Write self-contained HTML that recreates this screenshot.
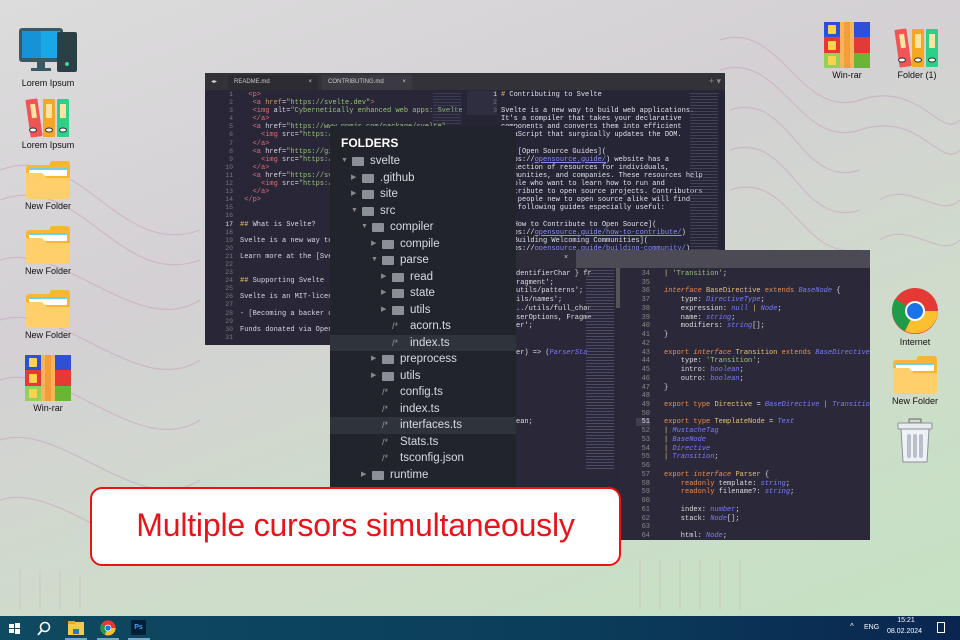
<!DOCTYPE html>
<html><head><meta charset="utf-8"><style>
*{margin:0;padding:0;box-sizing:border-box}
body{width:960px;height:640px;overflow:hidden;position:relative;font-family:"Liberation Sans",sans-serif;
background:linear-gradient(160deg,#dcdcdc 0%,#d4d0d4 35%,#cfdccb 65%,#c4e2c2 100%)}
.bgl{position:absolute;left:0;top:0}
.ic{position:absolute;text-align:center;font-size:9px;color:#111;width:70px}
.ic svg{display:block;margin:0 auto 2px}
.win{position:absolute;overflow:hidden}
.mono{font-family:"Liberation Mono",monospace;white-space:pre}
.tree{position:absolute;left:330px;top:126px;width:186px;height:370px;background:#21252b;color:#d7dae0;font-size:11.5px}
.tree .r{height:16.5px;line-height:16.5px;position:relative}
.tree .hl{background:#2f333b}
.tree .a{position:absolute;font-size:7px;color:#888}
.tree .f{position:absolute;top:4px;width:12px;height:9px;background:#8b8f96;border-radius:1px}
.tree .s{position:absolute;color:#999;font-size:9px}
.tree .t{position:absolute}
</style></head><body>
<svg class="bgl" width="960" height="640" fill="none" stroke="#c9a0c0" stroke-width="1.2" opacity=".55">
<path d="M0 170 C80 140 120 260 200 230"/><path d="M0 200 C80 170 120 290 200 260"/><path d="M0 260 C60 240 140 340 200 300"/><path d="M0 320 C60 300 140 400 200 360"/><path d="M0 380 C60 360 140 460 200 420"/><path d="M0 440 C60 420 140 520 200 480"/><path d="M0 500 C60 480 140 580 200 540"/>
<path d="M720 40 C780 20 800 120 860 100 S940 140 960 120"/><path d="M720 70 C780 50 800 150 860 130 S940 170 960 150"/><path d="M730 110 C790 90 800 190 860 170"/><path d="M730 150 C790 130 800 230 860 210"/><path d="M730 190 C790 170 800 260 860 250"/><path d="M880 200 C910 180 940 220 960 200"/><path d="M880 240 C910 220 940 260 960 240"/>
<g opacity=".5"><path d="M20 570 v40 M40 570 v40 M60 570 v40 M80 575 v35 M640 560 v50 M660 560 v50 M680 560 v50 M700 560 v50 M720 560 v50 M740 560 v50"/></g>
</svg>
<svg width="0" height="0" style="position:absolute">
<symbol id="fold" viewBox="0 0 46 40"><path d="M26 2h16a3 3 0 0 1 3 3v6H22z" fill="#f5b731"/><rect x="1" y="6" width="44" height="33" rx="3" fill="#f7b733"/><rect x="4" y="9" width="38" height="8" fill="#fff"/><rect x="4" y="9" width="38" height="2" fill="#6fd0e8"/><path d="M1 14h16l5 5h23v18a3 3 0 0 1-3 3H4a3 3 0 0 1-3-3z" fill="#fecf6b"/></symbol>
<symbol id="books" viewBox="0 0 46 42"><rect x="3" y="3" width="12" height="38" rx="1" fill="#f05454" transform="rotate(-8 9 22)"/><rect x="18" y="3" width="12" height="38" rx="1" fill="#f5a623"/><rect x="32" y="3" width="12" height="38" rx="1" fill="#2ecf86"/><rect x="7" y="8" width="5" height="14" fill="#ffe3a0" transform="rotate(-8 9 22)"/><rect x="21" y="8" width="6" height="14" fill="#ffe3a0"/><rect x="35" y="8" width="6" height="14" fill="#ffe3a0"/><ellipse cx="8" cy="34" rx="3.5" ry="2" fill="#fff" stroke="#333"/><ellipse cx="24" cy="34" rx="3.5" ry="2" fill="#fff" stroke="#333"/><ellipse cx="38" cy="34" rx="3.5" ry="2" fill="#fff" stroke="#333"/></symbol>
<symbol id="rar" viewBox="0 0 46 46"><rect x="0" y="0" width="46" height="15" fill="#2e4fd8"/><rect x="0" y="15" width="46" height="16" fill="#e53935"/><rect x="0" y="31" width="46" height="15" fill="#6ab534"/><rect x="0" y="31" width="16" height="15" fill="#93d25a"/><rect x="16" y="0" width="14" height="46" fill="#f7b45a"/><rect x="20" y="0" width="6" height="46" fill="#f39c3a"/><rect x="4" y="3" width="8" height="9" rx="1" fill="#fdd34d"/><rect x="4" y="19" width="8" height="9" rx="1" fill="#fdd34d"/><rect x="4" y="34" width="8" height="9" rx="1" fill="#fdd34d"/></symbol>
</svg>
<div class="ic" style="left:13px;top:26px"><svg width="62" height="50" viewBox="0 0 62 50"><rect x="2" y="2" width="44" height="34" rx="3" fill="#3b5964"/><rect x="5" y="5" width="38" height="27" fill="#19a7e8"/><rect x="5" y="5" width="19" height="27" fill="#1693d6"/><rect x="20" y="36" width="8" height="6" fill="#3b5964"/><rect x="14" y="42" width="20" height="3" fill="#3b5964"/><rect x="40" y="6" width="20" height="40" rx="2" fill="#2b3f46"/><circle cx="50" cy="38" r="2" fill="#3ed49a"/></svg>Lorem Ipsum</div>
<div class="ic" style="left:13px;top:96px"><svg width="46" height="42"><use href="#books"/></svg>Lorem Ipsum</div>
<div class="ic" style="left:13px;top:159px"><svg width="46" height="40"><use href="#fold"/></svg>New Folder</div>
<div class="ic" style="left:13px;top:224px"><svg width="46" height="40"><use href="#fold"/></svg>New Folder</div>
<div class="ic" style="left:13px;top:288px"><svg width="46" height="40"><use href="#fold"/></svg>New Folder</div>
<div class="ic" style="left:13px;top:355px"><svg width="46" height="46"><use href="#rar"/></svg>Win-rar</div>
<div class="ic" style="left:812px;top:22px"><svg width="46" height="46"><use href="#rar"/></svg>Win-rar</div>
<div class="ic" style="left:882px;top:26px"><svg width="46" height="42"><use href="#books"/></svg>Folder (1)</div>
<div class="ic" style="left:880px;top:287px"><svg width="48" height="48" viewBox="0 0 48 48"><circle cx="24" cy="24" r="23" fill="#e53935"/><path d="M24 24 L4 12 A23 23 0 0 0 14 44 Z" fill="#1e9c4a"/><path d="M24 24 L14 44 A23 23 0 0 0 47 24 Z" fill="#fbc02d"/><circle cx="24" cy="24" r="10" fill="#fff"/><circle cx="24" cy="24" r="8" fill="#1a73e8"/></svg>Internet</div>
<div class="ic" style="left:880px;top:354px"><svg width="46" height="40"><use href="#fold"/></svg>New Folder</div>
<div class="ic" style="left:880px;top:418px"><svg width="40" height="46" viewBox="0 0 40 46"><rect x="14" y="1" width="12" height="4" rx="1" fill="none" stroke="#888" stroke-width="1.5"/><rect x="3" y="5" width="34" height="6" rx="1" fill="#e8ecf2" stroke="#8a8f98"/><path d="M6 11h28l-2 33H8z" fill="#eef1f5" stroke="#8a8f98"/><rect x="12" y="16" width="4" height="24" rx="2" fill="#b9c0cc"/><rect x="18" y="16" width="4" height="24" rx="2" fill="#b9c0cc"/><rect x="24" y="16" width="4" height="24" rx="2" fill="#b9c0cc"/></svg></div>

<div class="win" style="left:205px;top:73px;width:520px;height:272px;background:#282637">
 <div style="height:17px;background:#333238;position:relative;font-size:6px;color:#ccc">
  <span style="position:absolute;left:6px;top:5px;font-size:6px">◂▸</span>
  <div style="position:absolute;left:23px;top:2px;width:90px;height:15px;background:#2d2c33;padding:4px 6px">README.md<span style="float:right">×</span></div>
  <div style="position:absolute;left:117px;top:2px;width:90px;height:15px;background:#3b3a42;padding:4px 6px">CONTRIBUTING.md<span style="float:right">×</span></div>
  <span style="position:absolute;right:4px;top:3px;font-size:9px;color:#888">+ ▾</span>
 </div>
 <div class="mono" style="position:absolute;left:0;top:18px;width:28px;text-align:right;font-size:6.5px;line-height:8.1px;color:#777">1
2
3
4
5
6
7
8
9
10
11
12
13
14
15
16
<span style="color:#ddd">17</span>
18
19
20
21
22
23
24
25
26
27
28
29
30
31</div>
 <div class="mono" style="position:absolute;left:35px;top:18px;font-size:7px;line-height:8.1px;color:#d8d8e0">  <span style="color:#e06c75">&lt;p&gt;</span>
   <span style="color:#e06c75">&lt;a</span> <span style="color:#d19a66">href</span>=<span style="color:#98c379">"https://svelte.dev"</span><span style="color:#e06c75">&gt;</span>
   <span style="color:#e06c75">&lt;img</span> alt=<span style="color:#98c379">"Cybernetically enhanced web apps: Svelte"</span>
   <span style="color:#e06c75">&lt;/a&gt;</span>
   <span style="color:#e06c75">&lt;a</span> href=<span style="color:#98c379">"https://www.npmjs.com/package/svelte"</span>
     <span style="color:#e06c75">&lt;img</span> src=<span style="color:#98c379">"https://img"</span>
   <span style="color:#e06c75">&lt;/a&gt;</span>
   <span style="color:#e06c75">&lt;a</span> href=<span style="color:#98c379">"https://github"</span>
     <span style="color:#e06c75">&lt;img</span> src=<span style="color:#98c379">"https://img"</span>
   <span style="color:#e06c75">&lt;/a&gt;</span>
   <span style="color:#e06c75">&lt;a</span> href=<span style="color:#98c379">"https://svelte"</span>
     <span style="color:#e06c75">&lt;img</span> src=<span style="color:#98c379">"https://img"</span>
   <span style="color:#e06c75">&lt;/a&gt;</span>
 <span style="color:#e06c75">&lt;/p&gt;</span>


<span style="color:#f0c060">##</span> What is Svelte?

Svelte is a new way to build

Learn more at the [Svelte


<span style="color:#f0c060">##</span> Supporting Svelte

Svelte is an MIT-licensed

- [Becoming a backer on

Funds donated via Open C</div>
 <div style="position:absolute;left:228px;top:20px;width:28px;height:90px;background:repeating-linear-gradient(#4a4a6a 0 1px,transparent 1px 3px);opacity:.6"></div>
 <div style="position:absolute;left:257px;top:18px;width:300px;height:254px;background:#262535"></div>
 <div class="mono" style="position:absolute;left:262px;top:18px;width:30px;text-align:right;font-size:6.5px;line-height:8.1px;color:#777;background:#2f2e40"><span style="color:#ddd">1</span>
2
3</div>
 <div class="mono" style="position:absolute;left:296px;top:18px;font-size:7px;line-height:8.1px;color:#e0e0e8"><span style="color:#f0c060">#</span> Contributing to Svelte

Svelte is a new way to build web applications.
It's a compiler that takes your declarative
components and converts them into efficient
JavaScript that surgically updates the DOM.

The [Open Source Guides](
https://<span style="color:#8a8aff;text-decoration:underline">opensource.guide/</span>) website has a
collection of resources for individuals,
communities, and companies. These resources help
people who want to learn how to run and
contribute to open source projects. Contributors
and people new to open source alike will find
the following guides especially useful:

* [How to Contribute to Open Source](
https://<span style="color:#8a8aff;text-decoration:underline">opensource.guide/how-to-contribute/</span>)
* [Building Welcoming Communities](
https://<span style="color:#8a8aff;text-decoration:underline">opensource.guide/building-community/</span>)</div>
 <div style="position:absolute;left:485px;top:20px;width:28px;height:160px;background:repeating-linear-gradient(#55556f 0 1px,transparent 1px 3px);opacity:.6"></div>
</div>

<div class="win" style="left:516px;top:250px;width:354px;height:290px;background:#2a2838">
 <div style="height:18px;background:#4b4a55;position:relative"><div style="position:absolute;left:0;top:0;width:60px;height:18px;background:#2d2c38;color:#ccc;font-size:7px;padding:4px 0 0 48px">×</div></div>
 <div class="mono" style="position:absolute;left:0;top:20px;font-size:7px;line-height:8.73px;color:#ddd">dentifierChar } fr
ragment';
utils/patterns';
ils/names';
../utils/full_char
serOptions, Fragme
er';


er) =&gt; (<span style="color:#7a7aff;font-style:italic">ParserSta</span>







ean;</div>
 <div style="position:absolute;left:70px;top:20px;width:28px;height:200px;background:repeating-linear-gradient(#5a5a78 0 1px,transparent 1px 3px);opacity:.7"></div>
 <div style="position:absolute;left:100px;top:18px;width:4px;height:40px;background:#555"></div>
 <div style="position:absolute;left:104px;top:18px;width:250px;height:272px;background:#2b2939"></div>
 <div class="mono" style="position:absolute;left:104px;top:20px;width:30px;text-align:right;font-size:7px;line-height:8.73px;color:#888">34
35
36
37
38
39
40
41
42
43
44
45
46
47
48
49
50
<span style="background:#3e3d52;color:#ddd;padding-left:6px">51</span>
52
53
54
55
56
57
58
59
60
61
62
63
64</div>
 <div class="mono" style="position:absolute;left:148px;top:20px;font-size:7px;line-height:8.73px;color:#ddd"><span style="color:#e5c07b">|</span> <span style="color:#98c379">'Transition'</span>;

<span style="color:#f08d49;font-style:italic">interface</span> <span style="color:#e5c07b">BaseDirective</span> <span style="color:#f08d49">extends</span> <span style="color:#7a7aff;font-style:italic">BaseNode</span> {
    type: <span style="color:#7a7aff;font-style:italic">DirectiveType</span>;
    expression: <span style="color:#7a7aff;font-style:italic">null</span> <span style="color:#e5c07b">|</span> <span style="color:#7a7aff;font-style:italic">Node</span>;
    name: <span style="color:#7a7aff;font-style:italic">string</span>;
    modifiers: <span style="color:#7a7aff;font-style:italic">string</span>[];
}

<span style="color:#f08d49">export</span> <span style="color:#f08d49;font-style:italic">interface</span> <span style="color:#e5c07b">Transition</span> <span style="color:#f08d49">extends</span> <span style="color:#7a7aff;font-style:italic">BaseDirective</span>
    type: <span style="color:#98c379">'Transition'</span>;
    intro: <span style="color:#7a7aff;font-style:italic">boolean</span>;
    outro: <span style="color:#7a7aff;font-style:italic">boolean</span>;
}

<span style="color:#f08d49">export</span> <span style="color:#f08d49">type</span> <span style="color:#e5c07b">Directive</span> = <span style="color:#7a7aff;font-style:italic">BaseDirective</span> <span style="color:#e5c07b">|</span> <span style="color:#7a7aff;font-style:italic">Transition</span>

<span style="color:#f08d49">export</span> <span style="color:#f08d49">type</span> <span style="color:#e5c07b">TemplateNode</span> = <span style="color:#7a7aff;font-style:italic">Text</span>
<span style="color:#e5c07b">|</span> <span style="color:#7a7aff;font-style:italic">MustacheTag</span>
<span style="color:#e5c07b">|</span> <span style="color:#7a7aff;font-style:italic">BaseNode</span>
<span style="color:#e5c07b">|</span> <span style="color:#7a7aff;font-style:italic">Directive</span>
<span style="color:#e5c07b">|</span> <span style="color:#7a7aff;font-style:italic">Transition</span>;

<span style="color:#f08d49">export</span> <span style="color:#f08d49;font-style:italic">interface</span> <span style="color:#e5c07b">Parser</span> {
    <span style="color:#f08d49">readonly</span> template: <span style="color:#7a7aff;font-style:italic">string</span>;
    <span style="color:#f08d49">readonly</span> filename?: <span style="color:#7a7aff;font-style:italic">string</span>;

    index: <span style="color:#7a7aff;font-style:italic">number</span>;
    stack: <span style="color:#7a7aff;font-style:italic">Node</span>[];

    html: <span style="color:#7a7aff;font-style:italic">Node</span>;</div>
</div>

<div class="tree">
 <div style="height:27px;padding:10px 0 0 11px;font-weight:bold;font-size:12px;color:#fff">FOLDERS</div>
 <div class="r"><span class="a" style="left:11px">▼</span><span class="f" style="left:22px"></span><span class="t" style="left:40px">svelte</span></div>
 <div class="r"><span class="a" style="left:21px">▶</span><span class="f" style="left:32px"></span><span class="t" style="left:50px">.github</span></div>
 <div class="r"><span class="a" style="left:21px">▶</span><span class="f" style="left:32px"></span><span class="t" style="left:50px">site</span></div>
 <div class="r"><span class="a" style="left:21px">▼</span><span class="f" style="left:32px"></span><span class="t" style="left:50px">src</span></div>
 <div class="r"><span class="a" style="left:31px">▼</span><span class="f" style="left:42px"></span><span class="t" style="left:60px">compiler</span></div>
 <div class="r"><span class="a" style="left:41px">▶</span><span class="f" style="left:52px"></span><span class="t" style="left:70px">compile</span></div>
 <div class="r"><span class="a" style="left:41px">▼</span><span class="f" style="left:52px"></span><span class="t" style="left:70px">parse</span></div>
 <div class="r"><span class="a" style="left:51px">▶</span><span class="f" style="left:62px"></span><span class="t" style="left:80px">read</span></div>
 <div class="r"><span class="a" style="left:51px">▶</span><span class="f" style="left:62px"></span><span class="t" style="left:80px">state</span></div>
 <div class="r"><span class="a" style="left:51px">▶</span><span class="f" style="left:62px"></span><span class="t" style="left:80px">utils</span></div>
 <div class="r"><span class="s" style="left:62px">/*</span><span class="t" style="left:80px">acorn.ts</span></div>
 <div class="r hl"><span class="s" style="left:62px">/*</span><span class="t" style="left:80px">index.ts</span></div>
 <div class="r"><span class="a" style="left:41px">▶</span><span class="f" style="left:52px"></span><span class="t" style="left:70px">preprocess</span></div>
 <div class="r"><span class="a" style="left:41px">▶</span><span class="f" style="left:52px"></span><span class="t" style="left:70px">utils</span></div>
 <div class="r"><span class="s" style="left:52px">/*</span><span class="t" style="left:70px">config.ts</span></div>
 <div class="r"><span class="s" style="left:52px">/*</span><span class="t" style="left:70px">index.ts</span></div>
 <div class="r hl"><span class="s" style="left:52px">/*</span><span class="t" style="left:70px">interfaces.ts</span></div>
 <div class="r"><span class="s" style="left:52px">/*</span><span class="t" style="left:70px">Stats.ts</span></div>
 <div class="r"><span class="s" style="left:52px">/*</span><span class="t" style="left:70px">tsconfig.json</span></div>
 <div class="r"><span class="a" style="left:31px">▶</span><span class="f" style="left:42px"></span><span class="t" style="left:60px">runtime</span></div>
</div>

<div style="position:absolute;left:90px;top:487px;width:531px;height:79px;background:#fff;border:2px solid #f01010;border-radius:12px;color:#e8141a;font-size:32px;text-align:center;line-height:72px;letter-spacing:-.2px">Multiple cursors simultaneously</div>

<div style="position:absolute;left:0;top:616px;width:960px;height:24px;background:linear-gradient(90deg,#0e4a60,#0b3d5a 60%,#0a2550)">
 <svg style="position:absolute;left:9px;top:7px" width="11" height="11"><rect x="0" y="1" width="5" height="4" fill="#fff"/><rect x="6" y="0" width="5" height="5" fill="#fff"/><rect x="0" y="6" width="5" height="4" fill="#fff"/><rect x="6" y="6" width="5" height="5" fill="#fff"/></svg>
 <svg style="position:absolute;left:37px;top:5px" width="14" height="15"><circle cx="8" cy="6" r="4.5" stroke="#fff" stroke-width="1.6" fill="none"/><path d="M5 9 L1 14" stroke="#fff" stroke-width="1.8"/></svg>
 <svg style="position:absolute;left:68px;top:5px" width="16" height="14"><rect x="0" y="1" width="16" height="13" fill="#f7c94a"/><rect x="0" y="0" width="7" height="3" fill="#e8a623"/><rect x="5" y="8" width="6" height="5" fill="#2478c7"/></svg>
 <div style="position:absolute;left:65px;top:22px;width:22px;height:2px;background:#7aa7c7"></div>
 <svg style="position:absolute;left:100px;top:4px" width="16" height="16" viewBox="0 0 48 48"><circle cx="24" cy="24" r="23" fill="#e53935"/><path d="M24 24 L4 12 A23 23 0 0 0 14 44 Z" fill="#1e9c4a"/><path d="M24 24 L14 44 A23 23 0 0 0 47 24 Z" fill="#fbc02d"/><circle cx="24" cy="24" r="10" fill="#fff"/><circle cx="24" cy="24" r="8" fill="#1a73e8"/></svg>
 <div style="position:absolute;left:97px;top:22px;width:22px;height:2px;background:#7aa7c7"></div>
 <div style="position:absolute;left:131px;top:4px;width:15px;height:15px;background:#001e36;color:#31a8ff;font-size:7px;font-weight:bold;text-align:center;line-height:15px">Ps</div>
 <div style="position:absolute;left:128px;top:22px;width:22px;height:2px;background:#7aa7c7"></div>
 <span style="position:absolute;left:850px;top:6px;color:#fff;font-size:8px">^</span>
 <span style="position:absolute;left:864px;top:8px;color:#fff;font-size:7px">ENG</span>
 <span style="position:absolute;left:894px;top:1px;color:#fff;font-size:7px;width:24px;text-align:center">15:21</span>
 <span style="position:absolute;left:887px;top:12px;color:#fff;font-size:7px">08.02.2024</span>
 <div style="position:absolute;left:937px;top:6px;width:8px;height:11px;border:1px solid #fff"></div>
</div>
</body></html>
